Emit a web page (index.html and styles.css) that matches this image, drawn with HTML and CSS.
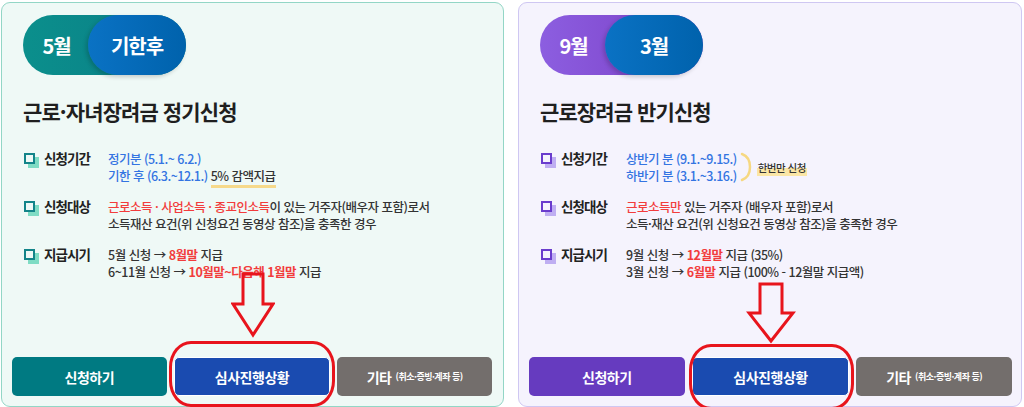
FILE: index.html
```html
<!DOCTYPE html>
<html lang="ko">
<head>
<meta charset="utf-8">
<link rel="stylesheet" href="styles.css">
</head>
<body>
<div class="page">
  <section class="card card-teal">
    <div class="pill">
      <span class="pill-a">5월</span>
      <span class="pill-b">기한후</span>
    </div>
    <h2 class="title">근로·자녀장려금 정기신청</h2>
    <div class="items">
      <div class="item">
        <svg class="ico" width="16" height="17" viewBox="0 0 16 17"><rect class="ico-fill" x="5" y="5" width="11" height="11"/><rect class="ico-line" x="2" y="2" width="9" height="9"/></svg>
        <span class="label">신청기간</span>
        <div class="vals">
          <div class="blue">정기분 (5.1.~ 6.2.)</div>
          <div><span class="blue">기한 후 (6.3.~12.1.)</span> <span class="uline">5% 감액지급</span></div>
        </div>
      </div>
      <div class="item">
        <svg class="ico" width="16" height="17" viewBox="0 0 16 17"><rect class="ico-fill" x="5" y="5" width="11" height="11"/><rect class="ico-line" x="2" y="2" width="9" height="9"/></svg>
        <span class="label">신청대상</span>
        <div class="vals">
          <div><span class="red">근로소득 · 사업소득 · 종교인소득</span>이 있는 거주자(배우자 포함)로서</div>
          <div>소득재산 요건(위 신청요건 동영상 참조)을 충족한 경우</div>
        </div>
      </div>
      <div class="item">
        <svg class="ico" width="16" height="17" viewBox="0 0 16 17"><rect class="ico-fill" x="5" y="5" width="11" height="11"/><rect class="ico-line" x="2" y="2" width="9" height="9"/></svg>
        <span class="label">지급시기</span>
        <div class="vals">
          <div>5월 신청 → <b class="red">8월말</b> 지급</div>
          <div>6~11월 신청 → <b class="red">10월말~다음해 1월말</b> 지급</div>
        </div>
      </div>
    </div>
    <div class="btns">
      <a class="btn btn-main">신청하기</a>
      <a class="btn btn-blue">심사진행상황</a>
      <a class="btn btn-gray">기타 <small>(취소·증빙·계좌 등)</small></a>
    </div>
    <svg class="arrow arrow-l" width="44" height="66" viewBox="0 0 44 66"><path d="M12 2 H32 V32 H42 L22 63 L2 32 H12 Z" fill="none" stroke="#e8141c" stroke-width="3" stroke-linejoin="miter"/></svg>
    <div class="ring ring-l"></div>
  </section>

  <section class="card card-purple">
    <div class="pill">
      <span class="pill-a">9월</span>
      <span class="pill-b">3월</span>
    </div>
    <h2 class="title">근로장려금 반기신청</h2>
    <div class="items">
      <div class="item">
        <svg class="ico" width="16" height="17" viewBox="0 0 16 17"><rect class="ico-fill" x="5" y="5" width="11" height="11"/><rect class="ico-line" x="2" y="2" width="9" height="9"/></svg>
        <span class="label">신청기간</span>
        <div class="vals vals-row">
          <div>
            <div class="blue">상반기 분 (9.1.~9.15.)</div>
            <div class="blue">하반기 분 (3.1.~3.16.)</div>
          </div>
          <svg class="brace" width="12" height="30" viewBox="0 0 12 30"><path d="M2 2 Q10 5 10 15 Q10 25 2 28" fill="none" stroke="#f6d882" stroke-width="2.5" stroke-linecap="round"/></svg>
          <span class="once">한번만 신청</span>
        </div>
      </div>
      <div class="item">
        <svg class="ico" width="16" height="17" viewBox="0 0 16 17"><rect class="ico-fill" x="5" y="5" width="11" height="11"/><rect class="ico-line" x="2" y="2" width="9" height="9"/></svg>
        <span class="label">신청대상</span>
        <div class="vals">
          <div><span class="red">근로소득만</span> 있는 거주자 (배우자 포함)로서</div>
          <div>소득·재산 요건(위 신청요건 동영상 참조)을 충족한 경우</div>
        </div>
      </div>
      <div class="item">
        <svg class="ico" width="16" height="17" viewBox="0 0 16 17"><rect class="ico-fill" x="5" y="5" width="11" height="11"/><rect class="ico-line" x="2" y="2" width="9" height="9"/></svg>
        <span class="label">지급시기</span>
        <div class="vals">
          <div>9월 신청 → <b class="red">12월말</b> 지급 (35%)</div>
          <div>3월 신청 → <b class="red">6월말</b> 지급 (100% - 12월말 지급액)</div>
        </div>
      </div>
    </div>
    <div class="btns">
      <a class="btn btn-main">신청하기</a>
      <a class="btn btn-blue">심사진행상황</a>
      <a class="btn btn-gray">기타 <small>(취소·증빙·계좌 등)</small></a>
    </div>
    <svg class="arrow arrow-r" width="50" height="62" viewBox="0 0 50 62"><path d="M14 2 H36 V31 H47 L25 59 L3 31 H14 Z" fill="none" stroke="#e8141c" stroke-width="3" stroke-linejoin="miter"/></svg>
    <div class="ring ring-r"></div>
  </section>
</div>
</body>
</html>
```

FILE: styles.css
```css
* { box-sizing: border-box; }
html, body { margin: 0; padding: 0; background: #fff; }
body {
  font-family: "Noto Sans CJK KR", "Noto Sans", sans-serif;
  color: #333;
}
.page {
  display: flex;
  gap: 14px;
  padding: 2px 2px 0 1px;
  width: 1024px;
  height: 407px;
  overflow: hidden;
}
.card {
  position: relative;
  width: 503px;
  height: 405px;
  border-radius: 9px;
  padding: 12px 11px 10px 10px;
  display: flex;
  flex-direction: column;
}
.card-teal { background: #eff9f6; border: 1.5px solid #93d6c6; }
.card-purple { background: #f5f3fd; border: 1.5px solid #cfc7f2; width: 504px; padding-right: 9px; }

.pill, .title, .items { margin-left: 11px; }

.pill {
  display: flex;
  width: 163px;
  height: 60px;
  border-radius: 30px;
  position: relative;
}
.card-teal .pill { background: linear-gradient(90deg, #0b8f8c, #0a7d86); }
.card-purple .pill { background: linear-gradient(90deg, #8c5ee0, #7a3dc4); }
.pill-a {
  width: 65px;
  display: flex;
  align-items: center;
  justify-content: center;
  padding-left: 2px;
  color: #fff;
  font-weight: 700;
  font-size: 20px;
  letter-spacing: -1px;
}
.pill-b {
  flex: 1;
  display: flex;
  align-items: center;
  justify-content: center;
  border-radius: 30px;
  background: linear-gradient(90deg, #0a72c4, #0062ac);
  color: #fff;
  font-weight: 700;
  font-size: 20px;
  letter-spacing: -1px;
  box-shadow: -2px 2px 4px rgba(0,0,0,0.18);
}

.title {
  margin-top: 22px;
  margin-bottom: 0;
  font-size: 21px;
  line-height: 28px;
  font-weight: 700;
  color: #1f1f1f;
  letter-spacing: -0.9px;
}

.items {
  margin-top: 25px;
  display: flex;
  flex-direction: column;
  gap: 14px;
}
.item {
  display: flex;
  align-items: flex-start;
}
.ico {
  display: block;
  width: 16px;
  height: 17px;
  margin-top: 2px;
  flex: none;
}
.ico-line { stroke-width: 2; }
.card-teal .ico-fill { fill: #7fdcc4; }
.card-teal .ico-line { stroke: #138489; fill: #eff9f6; }
.card-purple .ico-fill { fill: #bfaef2; }
.card-purple .ico-line { stroke: #6a3ccd; fill: #f5f3fd; }

.label {
  width: 69px;
  padding-left: 5px;
  font-size: 13.5px;
  font-weight: 700;
  line-height: 17px;
  color: #222;
  letter-spacing: -0.9px;
  flex: none;
}
.card-purple .label { width: 70px; }
.vals {
  font-size: 12.5px;
  font-weight: 500;
  line-height: 17px;
  letter-spacing: -0.5px;
  color: #333;
}
.vals-row { display: flex; align-items: center; }
.brace { margin-left: 3px; margin-right: 5px; }
.once {
  font-size: 10.5px;
  letter-spacing: -0.5px;
  background: linear-gradient(transparent 55%, #fbe6a6 55%);
  padding: 0 1px;
}
.blue { color: #3374e2; }
.red { color: #f23c3c; }
b.red { font-weight: 700; }
.uline {
  border-bottom: 3px solid #f6d98b;
}

.btns {
  margin-top: auto;
  display: flex;
  gap: 7px;
}
.btn {
  flex: 1;
  height: 39px;
  border-radius: 5px;
  display: flex;
  align-items: center;
  justify-content: center;
  color: #fff;
  font-weight: 700;
  font-size: 14px;
  letter-spacing: -0.5px;
}
.btn small { font-size: 9px; margin-left: 4px; letter-spacing: -0.5px; }
.card-teal .btn-main { background: #007a82; }
.card-purple .btn-main { background: #663bbf; }
.btn-blue { background: #1a4bb0; border: 1px solid #fff; }
.btn-gray { background: #736e6c; }

.arrow { position: absolute; }
.arrow-l { left: 229px; top: 269px; }
.arrow-r { left: 227px; top: 279px; }
.ring {
  position: absolute;
  border: 3px solid #e8141c;
  border-radius: 22px / 26px;
}
.ring-l { left: 167px; top: 338px; width: 166px; height: 66px; }
.ring-r { left: 170px; top: 341px; width: 165px; height: 66px; }
```
